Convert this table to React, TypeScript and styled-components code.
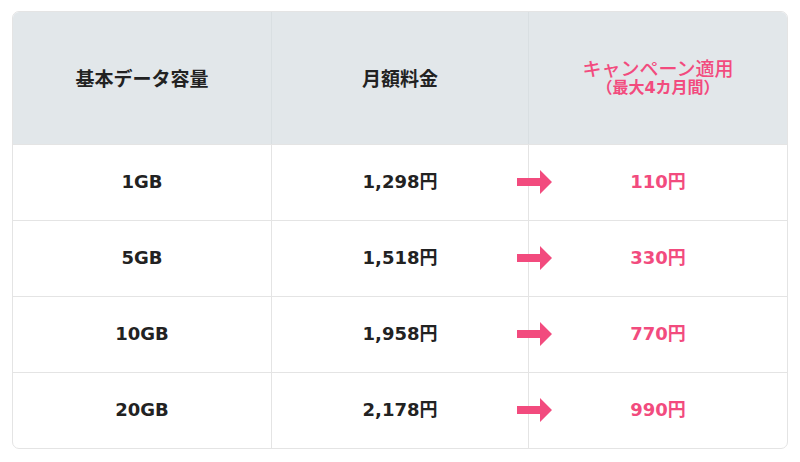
import React from "react";
import styled, { createGlobalStyle } from "styled-components";

const Global = createGlobalStyle`
  html, body { margin: 0; padding: 0; background: #ffffff; }
  body { font-family: "Noto Sans CJK JP", "Noto Sans", sans-serif; color: #222; }
`;

const Page = styled.div`
  padding: 11px 12px 0 12px;
`;

const Table = styled.div`
  display: grid;
  grid-template-columns: 259px 257px 1fr;
  border: 1px solid #e4e4e4;
  border-radius: 7px;
  overflow: hidden;
`;

const HeadCell = styled.div<{ $last?: boolean }>`
  height: 132px;
  background: #e2e7ea;
  display: flex;
  flex-direction: column;
  align-items: center;
  justify-content: center;
  border-right: ${(p) => (p.$last ? "none" : "1px solid #d9dfe2")};
  font-size: 19px;
  font-weight: 700;
  line-height: 20px;
  color: #222;
  box-sizing: border-box;
`;

const CampaignTitle = styled.div`
  color: #f24b7e;
  font-weight: 500;
  font-size: 19px;
  line-height: 20px;
`;

const CampaignSub = styled.div`
  color: #f24b7e;
  font-weight: 700;
  font-size: 16px;
  line-height: 20px;
  font-family: "DejaVu Sans", "Noto Sans CJK JP", sans-serif;
`;

const Cell = styled.div<{ $last?: boolean; $pink?: boolean }>`
  position: relative;
  height: 76px;
  box-sizing: border-box;
  display: flex;
  align-items: center;
  justify-content: center;
  border-right: ${(p) => (p.$last ? "none" : "1px solid #e4e4e4")};
  border-top: 1px solid #e4e4e4;
  font-family: "DejaVu Sans", "Noto Sans CJK JP", sans-serif;
  font-size: 18px;
  font-weight: 700;
  line-height: 22px;
  padding-bottom: 2px;
  color: ${(p) => (p.$pink ? "#f24b7e" : "#222")};
`;

const Arrow = styled.svg`
  position: absolute;
  left: -12px;
  top: 50%;
  margin-top: -13px;
  width: 35px;
  height: 24px;
`;

const rows = [
  ["1GB", "1,298円", "110円"],
  ["5GB", "1,518円", "330円"],
  ["10GB", "1,958円", "770円"],
  ["20GB", "2,178円", "990円"],
];

export default function App() {
  return (
    <>
      <Global />
      <Page>
        <Table>
          <HeadCell>基本データ容量</HeadCell>
          <HeadCell>月額料金</HeadCell>
          <HeadCell $last>
            <CampaignTitle>キャンペーン適用</CampaignTitle>
            <CampaignSub>（最大4カ月間）</CampaignSub>
          </HeadCell>
          {rows.map((r) => (
            <React.Fragment key={r[0]}>
              <Cell>{r[0]}</Cell>
              <Cell>{r[1]}</Cell>
              <Cell $last $pink>
                <Arrow viewBox="0 0 35 24">
                  <path d="M0 8 H23 V0 L35 12 L23 24 V16 H0 Z" fill="#f24b7e" />
                </Arrow>
                {r[2]}
              </Cell>
            </React.Fragment>
          ))}
        </Table>
      </Page>
    </>
  );
}
